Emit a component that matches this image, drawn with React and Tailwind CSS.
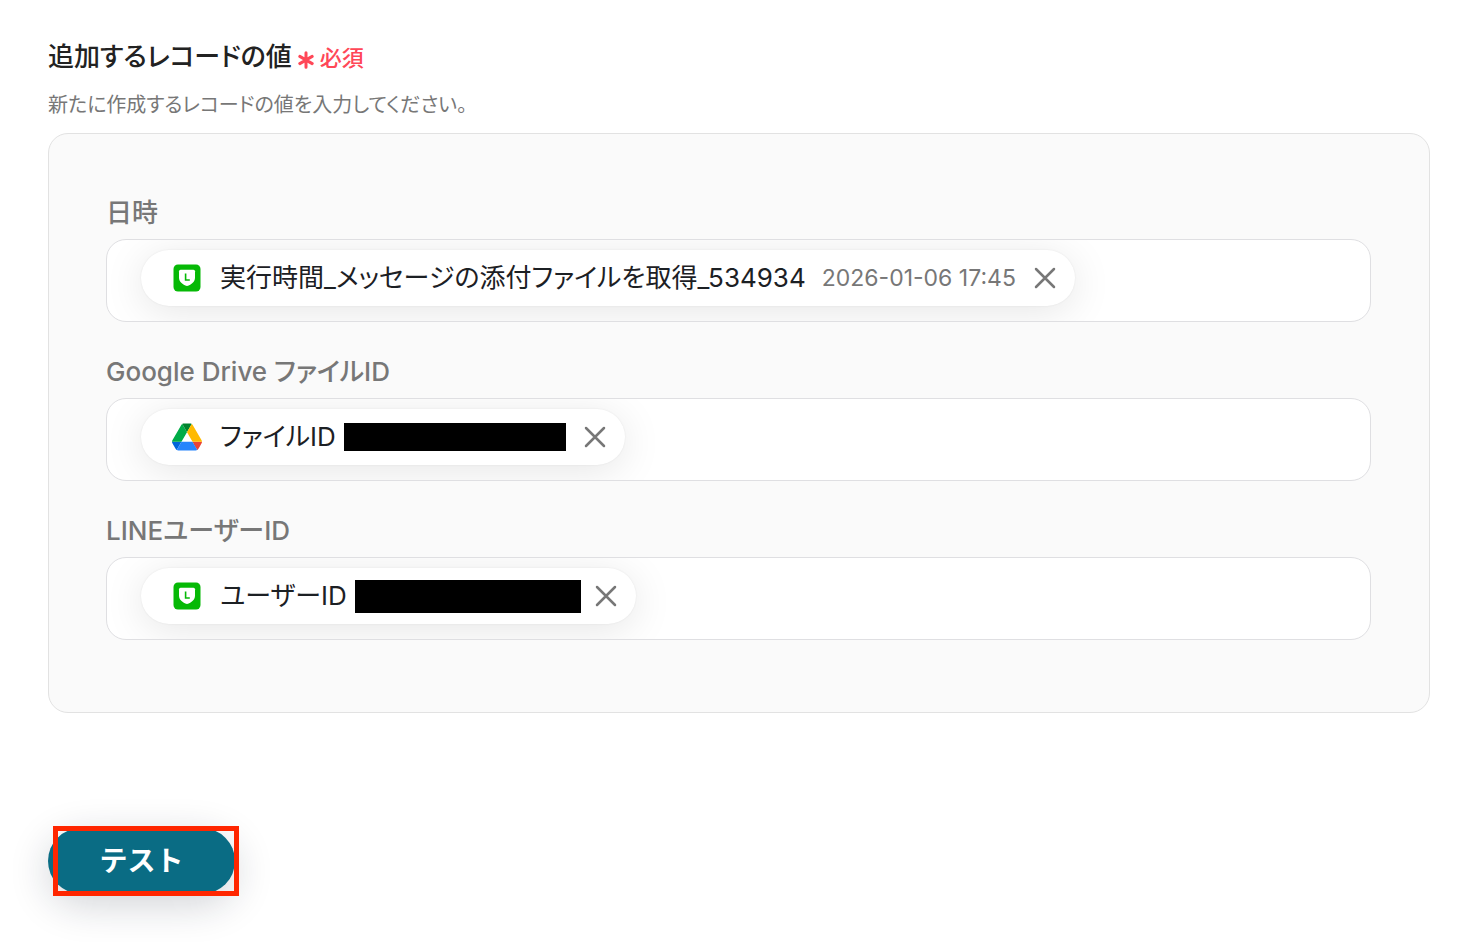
import { useId } from "react";

function LineIcon() {
  return (
    <svg viewBox="0 0 28 28" className="size-7 shrink-0" aria-hidden="true">
      <rect x="0.5" y="0.5" width="27" height="27" rx="4.5" fill="#06b906" />
      <path
        d="M7.500 5.700h13a1.500 1.500 0 0 1 1.500 1.500V13.500c0 4.200-3.400 7-8 8.600C9.400 20.500 6 17.700 6 13.500V7.200a1.500 1.500 0 0 1 1.500-1.500Z"
        fill="#fff"
      />
      <path d="M12.600 9.600v6.400h4.200" fill="none" stroke="#06b906" strokeWidth="1.600" />
    </svg>
  );
}

function DriveIcon() {
  return (
    <svg viewBox="0 0 87.3 78" className="h-7 w-[30px] shrink-0" aria-hidden="true">
      <path d="m6.6 66.85 3.850 6.650c.8 1.400 1.950 2.500 3.300 3.300l13.750-23.800h-27.500c0 1.550.4 3.100 1.200 4.500z" fill="#0066da" />
      <path d="m43.650 25-13.750-23.800c-1.350.8-2.500 1.900-3.300 3.300l-25.400 44a9.060 9.060 0 0 0 -1.200 4.500h27.500z" fill="#00ac47" />
      <path d="m73.550 76.800c1.350-.8 2.500-1.900 3.300-3.300l1.600-2.750 7.650-13.250c.8-1.400 1.200-2.950 1.200-4.500h-27.502l5.852 11.500z" fill="#ea4335" />
      <path d="m43.650 25 13.750-23.800c-1.350-.8-2.900-1.200-4.500-1.200h-18.500c-1.600 0-3.150.45-4.500 1.200z" fill="#00832d" />
      <path d="m59.800 53h-32.300l-13.750 23.800c1.350.8 2.900 1.200 4.500 1.200h50.800c1.600 0 3.150-.45 4.500-1.200z" fill="#2684fc" />
      <path d="m73.400 26.500-12.700-22c-.8-1.400-1.950-2.500-3.300-3.300l-13.750 23.800 16.150 28h27.450c0-1.550-.4-3.100-1.200-4.500z" fill="#ffba00" />
    </svg>
  );
}

function Field({ label, icon, name, children }) {
  const id = useId();
  return (
    <div className="flex flex-col gap-2">
      <label htmlFor={id} className="text-[26px] leading-9 font-medium text-[#777]">
        {label}
      </label>
      <div className="flex items-start overflow-hidden rounded-[20px] border border-[#dfdfe2] bg-white pt-[10px] pr-6 pb-[15px] pl-[34px]">
        <div className="flex h-14 shrink-0 items-center rounded-full bg-white pr-[18px] pl-[31px] shadow-[0_6px_40px_rgba(0,0,0,0.1),0_0_2px_rgba(0,0,0,0.08)]">
          <span className="flex w-[30px] justify-center">{icon}</span>
          <span className="ml-[18px] text-[26px] leading-9 text-[#1c2024]">{name}</span>
          {children}
          <button type="button" aria-label="削除" className="ml-[17px] cursor-pointer text-[#777]">
            <svg viewBox="0 0 24 24" className="size-6" fill="none" stroke="currentColor" strokeWidth="2.500" strokeLinecap="round" aria-hidden="true">
              <path d="M3 3l18 18M21 3L3 21" />
            </svg>
          </button>
        </div>
        <input id={id} type="text" className="h-14 min-w-0 flex-1 bg-transparent pl-2 text-[26px] outline-none" />
      </div>
    </div>
  );
}

export default function App() {
  return (
    <main className="bg-white pt-[39px] pr-[50px] pb-12 pl-12 font-['Inter','Noto_Sans_CJK_JP',sans-serif] [font-feature-settings:'palt']">
      <header>
        <div className="flex items-center gap-1.5">
          <h1 className="text-[26px] leading-9 font-medium text-[#222]">追加するレコードの値</h1>
          <span className="flex items-center gap-1.5 pt-0.5 text-[22px] leading-8 font-medium text-[#ff4757]">
            <svg viewBox="0 0 16 18" className="mt-1 h-[18px] w-4" fill="none" stroke="currentColor" strokeWidth="3" strokeLinecap="round" aria-hidden="true">
              <path d="M8 1.800v14.400M1.800 5.400l12.400 7.200M14.200 5.400l-12.400 7.200" />
            </svg>
            必須
          </span>
        </div>
        <p className="mt-4 text-[20px] leading-7 text-[#777]">新たに作成するレコードの値を入力してください。</p>
      </header>

      <section className="mt-[14px] flex flex-col gap-8 rounded-[20px] border border-[#e2e2e2] bg-[#fafafa] pt-[61px] pr-[58px] pb-[72px] pl-[57px]">
        <Field label="日時" icon={<LineIcon />} name="実行時間_メッセージの添付ファイルを取得_534934">
          <span className="ml-4 text-[23px] leading-8 text-[#777]">2026-01-06 17:45</span>
        </Field>
        <Field label="Google Drive ファイルID" icon={<DriveIcon />} name="ファイルID">
          <span className="ml-2 h-7 w-[222px] bg-black" />
        </Field>
        <Field label="LINEユーザーID" icon={<LineIcon />} name="ユーザーID">
          <span className="-mr-1 ml-2 h-[33px] w-[226px] bg-black" />
        </Field>
      </section>

      <div className="relative mt-[115px] w-fit">
        <button
          type="button"
          className="h-[66px] w-[187px] cursor-pointer rounded-full bg-[#0a6c84] text-[28px] leading-10 font-bold text-white shadow-[0_10px_40px_rgba(20,30,50,0.2)] [font-feature-settings:normal]"
        >
          テスト
        </button>
        <span className="pointer-events-none absolute -top-0.5 -right-1 -bottom-0.5 left-[5px] border-5 border-[#ff2600]" />
      </div>
    </main>
  );
}
